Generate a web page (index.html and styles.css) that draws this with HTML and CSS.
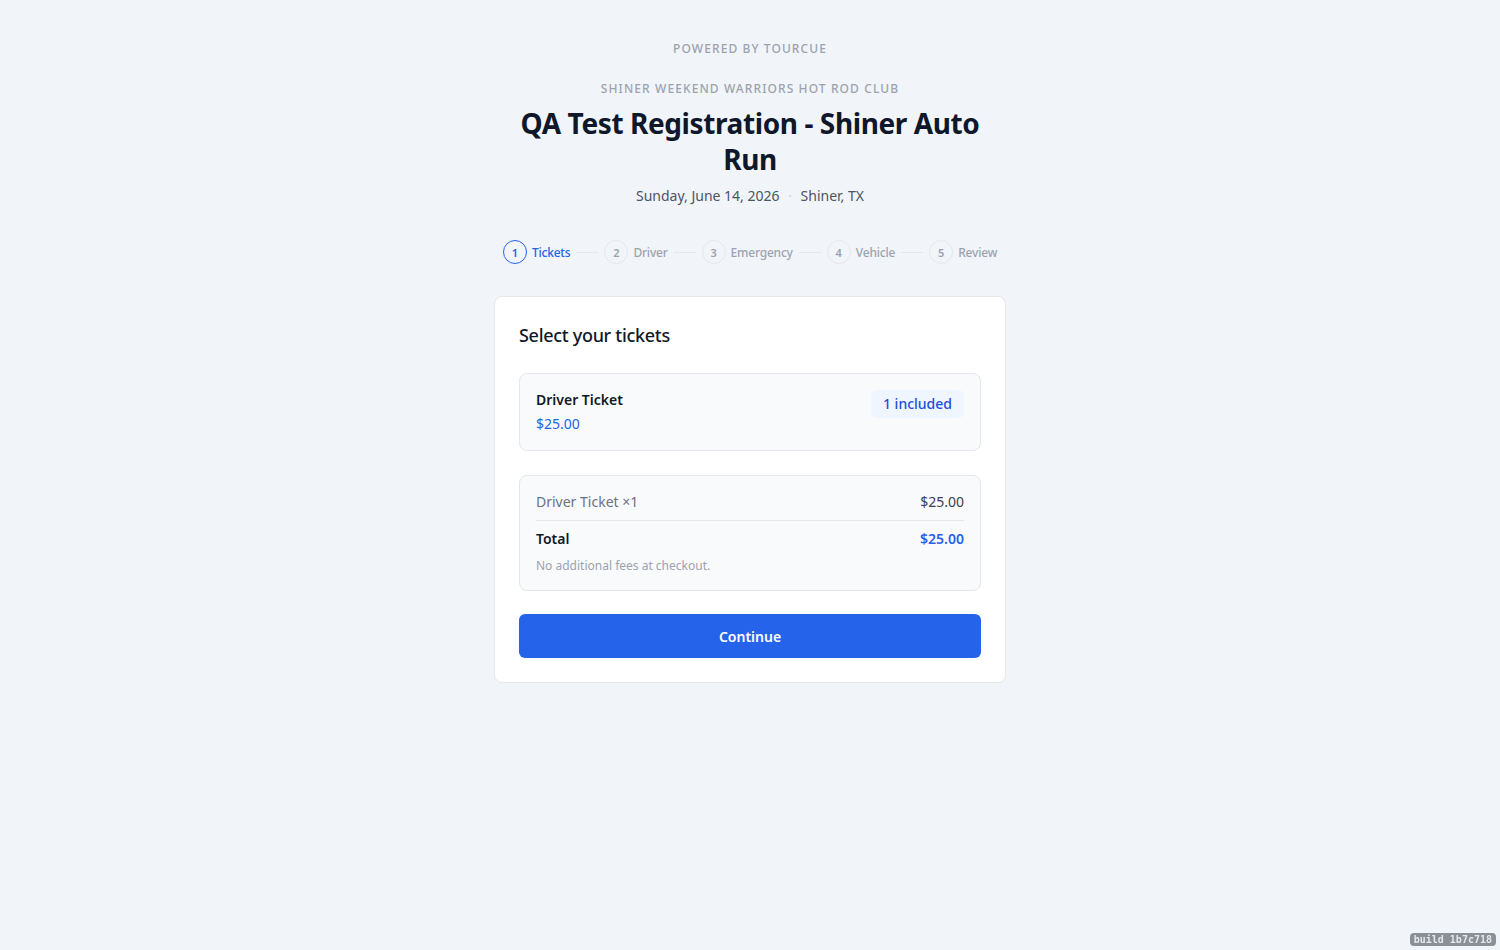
FILE: index.html
```html
<!DOCTYPE html>
<html lang="en">
<head>
  <meta charset="UTF-8" />
  <meta name="viewport" content="width=device-width, initial-scale=1" />
  <title>QA Test Registration - Shiner Auto Run</title>
  <link rel="stylesheet" href="styles.css">
</head>
<body>
  <div class="page">
    <div class="powered">Powered by Tourcue</div>

    <header class="event">
      <div class="club">Shiner Weekend Warriors Hot Rod Club</div>
      <h1>QA Test Registration - Shiner Auto Run</h1>
      <div class="meta">
        <span>Sunday, June 14, 2026</span>
        <span class="dot">·</span>
        <span>Shiner, TX</span>
      </div>
    </header>

    <!-- steps -->
    <ol class="steps">
      <li class="step active"><span class="num">1</span>Tickets</li>
      <li class="line"></li>
      <li class="step"><span class="num">2</span>Driver</li>
      <li class="line"></li>
      <li class="step"><span class="num">3</span>Emergency</li>
      <li class="line"></li>
      <li class="step"><span class="num">4</span>Vehicle</li>
      <li class="line"></li>
      <li class="step"><span class="num">5</span>Review</li>
    </ol>

    <section class="card">
      <h2>Select your tickets</h2>

      <div class="ticket">
        <div>
          <div class="ticket-name">Driver Ticket</div>
          <div class="ticket-price">$25.00</div>
        </div>
        <span class="badge">1 included</span>
      </div>

      <div class="summary">
        <div class="row">
          <span class="muted">Driver Ticket ×1</span>
          <span>$25.00</span>
        </div>
        <div class="row total">
          <span>Total</span>
          <span class="blue">$25.00</span>
        </div>
        <p class="note">No additional fees at checkout.</p>
      </div>

      <button type="button" class="btn">Continue</button>
    </section>
  </div>

  <div class="build">build 1b7c718</div>
</body>
</html>
```

FILE: styles.css
```css
body {
  margin: 0;
  background-color: #f1f4f9;
  font-family: "Noto Sans", "Open Sans", sans-serif;
  color: #111827;
}
.page {
  max-width: 512px;
  margin: 0 auto;
  padding: 41px 0;
}
.powered {
  text-align: center;
  font-size: 12px;
  line-height: 16px;
  font-weight: 500;
  letter-spacing: 1.1px;
  text-transform: uppercase;
  color: #9ca3af;
  margin-bottom: 24px;
}
.event {
  text-align: center;
}
.club {
  font-size: 12px;
  line-height: 16px;
  font-weight: 500;
  letter-spacing: 1.1px;
  text-transform: uppercase;
  color: #9ca3af;
}
h1 {
  margin: 8px 0 0;
  font-size: 28px;
  line-height: 36px;
  font-weight: 700;
  color: #0f172a;
  letter-spacing: -0.4px;
}
.meta {
  margin-top: 9px;
  font-size: 14px;
  line-height: 20px;
  color: #4b5563;
}
.meta .dot {
  color: #d1d5db;
  margin: 0 5px;
}
.steps {
  list-style: none;
  margin: 34px 0 32px;
  padding: 0;
  display: flex;
  align-items: center;
  justify-content: center;
}
.step {
  display: flex;
  align-items: center;
  gap: 5px;
  font-size: 12px;
  font-weight: 500;
  letter-spacing: -0.2px;
  color: #9ca3af;
}
.step .num {
  width: 22px;
  height: 22px;
  border: 1px solid #e5e7eb;
  border-radius: 50%;
  display: flex;
  align-items: center;
  justify-content: center;
  font-size: 11px;
  font-weight: 600;
  letter-spacing: 0;
}
.step.active {
  color: #2563eb;
}
.step.active .num {
  border-color: #2563eb;
}
.line {
  width: 22px;
  height: 1px;
  background: #e5e7eb;
  margin: 0 6px;
}
.card {
  background: white;
  border: 1px solid #e5e7eb;
  border-radius: 8px;
  padding: 24px;
}
h2 {
  margin: 0 0 24px;
  font-size: 18px;
  line-height: 28px;
  font-weight: 500;
  letter-spacing: -0.3px;
  color: #111827;
}
.ticket {
  display: flex;
  justify-content: space-between;
  align-items: flex-start;
  background: #f8fafc;
  border: 1px solid #e5e7eb;
  border-radius: 8px;
  padding: 16px;
}
.ticket-name {
  font-size: 14px;
  line-height: 20px;
  font-weight: 600;
}
.ticket-price {
  margin-top: 4px;
  font-size: 14px;
  line-height: 20px;
  color: #2563eb;
}
.badge {
  background: #eff6ff;
  color: #1d4ed8;
  font-size: 14px;
  line-height: 20px;
  font-weight: 500;
  padding: 4px 12px;
  border-radius: 6px;
}
.summary {
  margin-top: 24px;
  background: #f8fafc;
  border: 1px solid #e5e7eb;
  border-radius: 8px;
  padding: 16px;
}
.row {
  display: flex;
  justify-content: space-between;
  font-size: 14px;
  line-height: 20px;
  color: #374151;
}
.row .muted {
  color: #6b7280;
}
.row.total {
  border-top: 1px solid #e5e7eb;
  margin-top: 8px;
  padding-top: 8px;
  font-weight: 600;
  color: #111827;
}
.row .blue {
  color: #2563eb;
}
.note {
  margin: 9px 0 0;
  font-size: 12px;
  line-height: 16px;
  color: #9ca3af;
}
.btn {
  display: block;
  width: 100%;
  margin-top: 23px;
  height: 44px;
  border: none;
  border-radius: 6px;
  background-color: #2563eb;
  color: white;
  font-family: inherit;
  font-size: 14px;
  font-weight: 600;
  cursor: pointer;
}
.btn:hover {
  background-color: #1d4ed8;
}
.build {
  position: fixed;
  right: 4px;
  bottom: 4px;
  background: #8b8f96;
  color: #e5e7eb;
  font-family: "DejaVu Sans Mono", monospace;
  font-size: 10px;
  font-weight: 700;
  line-height: 13px;
  padding: 0 4px;
  border-radius: 4px;
}
```
